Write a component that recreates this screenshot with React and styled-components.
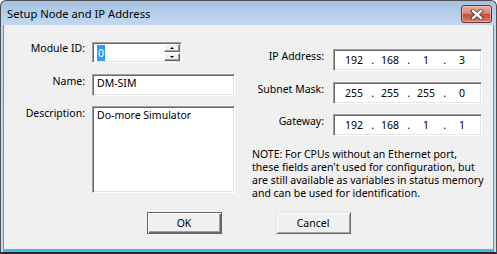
import React from 'react';
import styled, { createGlobalStyle } from 'styled-components';

const GlobalStyle = createGlobalStyle`
  html, body {
    margin: 0;
    padding: 0;
    background: #ffffff;
  }
  body {
    font-family: "Noto Sans", "Liberation Sans", sans-serif;
    font-size: 10.5px;
    color: #000;
  }
  * {
    box-sizing: border-box;
  }
`;

const Window = styled.div`
  display: flex;
  flex-direction: column;
  width: 497px;
  height: 254px;
  border: 1px solid #4f4f4f;
  border-bottom: 2px solid #2b2b2b;
  border-radius: 6px 6px 0 0;
  padding: 0 2px;
  background: linear-gradient(180deg, #a3c1e2 0px, #b8d0eb 14px, #c4d9ef 26px, #c6daf0 100%);
  overflow: hidden;
`;

const TitleBar = styled.div`
  display: flex;
  align-items: center;
  justify-content: space-between;
  height: 24px;
  padding: 0 2px 0 4px;
  flex-shrink: 0;
`;

const Title = styled.div`
  font-size: 11.2px;
  color: #000;
  line-height: 16px;
  margin-top: 1px;
`;

const CloseButton = styled.div`
  display: flex;
  align-items: center;
  justify-content: center;
  width: 31px;
  height: 18px;
  margin-top: 2px;
  border: 1px solid #6a2d2a;
  border-radius: 3px;
  background: linear-gradient(180deg, #e9ada2 0%, #dc8676 45%, #c64a36 55%, #d98069 100%);
  box-shadow: inset 0 0 0 1px rgba(255, 220, 210, 0.5);
`;

const Client = styled.div`
  flex: 1;
  display: flex;
  flex-direction: column;
  background: #f0f0f0;
  border-left: 1px solid #4c97d6;
  border-right: 1px solid #4c97d6;
  border-bottom: 3px solid #3dbde6;
  padding-top: 17px;
`;

const Body = styled.div`
  display: flex;
  align-items: flex-start;
`;

const LeftForm = styled.div`
  display: grid;
  grid-template-columns: 81px 143px;
  grid-template-rows: 22px 22px 87px;
  column-gap: 7px;
  row-gap: 10px;
`;

const RightForm = styled.div`
  display: grid;
  grid-template-columns: 84px 149px;
  grid-template-rows: 23px 22px 23px;
  column-gap: 9px;
  row-gap: 10px;
  margin-left: 5px;
  padding-top: 7px;
`;

const Label = styled.label`
  text-align: right;
  line-height: 15px;
  white-space: nowrap;
  margin-top: ${p => p.$offset || 0}px;
`;

const Sunken = styled.div`
  display: flex;
  width: ${p => p.$width || '100%'};
  height: ${p => p.$height}px;
  background: #ffffff;
  border-top: 1px solid #a0a0a0;
  border-left: 1px solid #a0a0a0;
  border-bottom: 1px solid #ffffff;
  border-right: 1px solid #ffffff;
  box-shadow: inset 1px 1px 0 #696969, inset -1px -1px 0 #e3e3e3;
`;

const TextValue = styled.div`
  flex: 1;
  padding: 1px 3px 0 4px;
  line-height: 15px;
  white-space: nowrap;
`;

const SpinText = styled.div`
  flex: 1;
  display: flex;
  align-items: center;
  padding-left: 4px;
`;

const Selected = styled.span`
  display: inline-block;
  height: 16px;
  line-height: 16px;
  padding: 0 1px;
  background: #3399ff;
  color: #ffffff;
`;

const Spinner = styled.div`
  display: flex;
  flex-direction: column;
  justify-content: center;
  gap: 1px;
  padding-right: 1px;
`;

const SpinButton = styled.div`
  display: flex;
  align-items: center;
  justify-content: center;
  width: 16px;
  height: 8px;
  background: #f0f0f0;
  border-top: 1px solid #ffffff;
  border-left: 1px solid #ffffff;
  border-bottom: 1px solid #696969;
  border-right: 1px solid #696969;
  box-shadow: inset -1px -1px 0 #a0a0a0;
`;

const Arrow = styled.div`
  width: 0;
  height: 0;
  border-left: 2px solid transparent;
  border-right: 2px solid transparent;
  ${p => (p.$down ? 'border-top: 2px solid #000;' : 'border-bottom: 2px solid #000;')}
`;

const IpBox = styled.div`
  flex: 1;
  display: grid;
  grid-template-columns: repeat(4, 36px);
  padding-left: 2px;
  align-items: center;
`;

const Octet = styled.div`
  position: relative;
  text-align: center;
  line-height: 15px;
  padding-top: 1px;
`;

const Dot = styled.span`
  position: absolute;
  right: -2px;
  top: 1px;
`;

const Note = styled.div`
  grid-column: 1 / -1;
  margin: 1px 0 0 12px;
  line-height: 13px;
  white-space: nowrap;
`;

const ButtonRow = styled.div`
  display: flex;
  justify-content: center;
  gap: 54px;
  margin-top: 12px;
`;

const Button = styled.div`
  display: flex;
  align-items: center;
  justify-content: center;
  width: 75px;
  height: 22px;
  background: #f0f0f0;
  line-height: 15px;
  border: 1px solid ${p => (p.$default ? '#646464' : '#e3e3e3')};
  ${p => (p.$default ? '' : 'border-bottom-color: #696969; border-right-color: #696969;')}
  box-shadow: ${p =>
    p.$default
      ? 'inset 1px 1px 0 #ffffff, inset -1px -1px 0 #696969, inset -2px -2px 0 #a0a0a0'
      : 'inset 1px 1px 0 #ffffff, inset -1px -1px 0 #a0a0a0'};
`;

function CloseIcon() {
  return (
    <svg width="14" height="11" viewBox="0 0 14 11">
      <path d="M3 2 L11 9 M11 2 L3 9" stroke="#3d3d3d" strokeWidth="4.2" strokeLinecap="square" />
      <path d="M3 2 L11 9 M11 2 L3 9" stroke="#ffffff" strokeWidth="2.4" strokeLinecap="square" />
    </svg>
  );
}

function IpField({ value }) {
  return (
    <Sunken $height={22}>
      <IpBox>
        {value.map((part, i) => (
          <Octet key={i}>
            {part}
            {i < 3 && <Dot>.</Dot>}
          </Octet>
        ))}
      </IpBox>
    </Sunken>
  );
}

export default function App() {
  return (
    <>
      <GlobalStyle />
      <Window>
        <TitleBar>
          <Title>Setup Node and IP Address</Title>
          <CloseButton>
            <CloseIcon />
          </CloseButton>
        </TitleBar>
        <Client>
          <Body>
            <LeftForm>
              <Label $offset={-1}>Module ID:</Label>
              <Sunken $height={21} $width="90px">
                <SpinText>
                  <Selected>0</Selected>
                </SpinText>
                <Spinner>
                  <SpinButton>
                    <Arrow />
                  </SpinButton>
                  <SpinButton>
                    <Arrow $down />
                  </SpinButton>
                </Spinner>
              </Sunken>
              <Label>Name:</Label>
              <Sunken $height={22}>
                <TextValue>DM-SIM</TextValue>
              </Sunken>
              <Label>Description:</Label>
              <Sunken $height={87}>
                <TextValue>Do-more Simulator</TextValue>
              </Sunken>
            </LeftForm>
            <RightForm>
              <Label>IP Address:</Label>
              <IpField value={['192', '168', '1', '3']} />
              <Label>Subnet Mask:</Label>
              <IpField value={['255', '255', '255', '0']} />
              <Label>Gateway:</Label>
              <IpField value={['192', '168', '1', '1']} />
              <Note>
                NOTE: For CPUs without an Ethernet port,
                <br />
                these fields aren't used for configuration, but
                <br />
                are still available as variables in status memory
                <br />
                and can be used for identification.
              </Note>
            </RightForm>
          </Body>
          <ButtonRow>
            <Button $default>OK</Button>
            <Button>Cancel</Button>
          </ButtonRow>
        </Client>
      </Window>
    </>
  );
}
